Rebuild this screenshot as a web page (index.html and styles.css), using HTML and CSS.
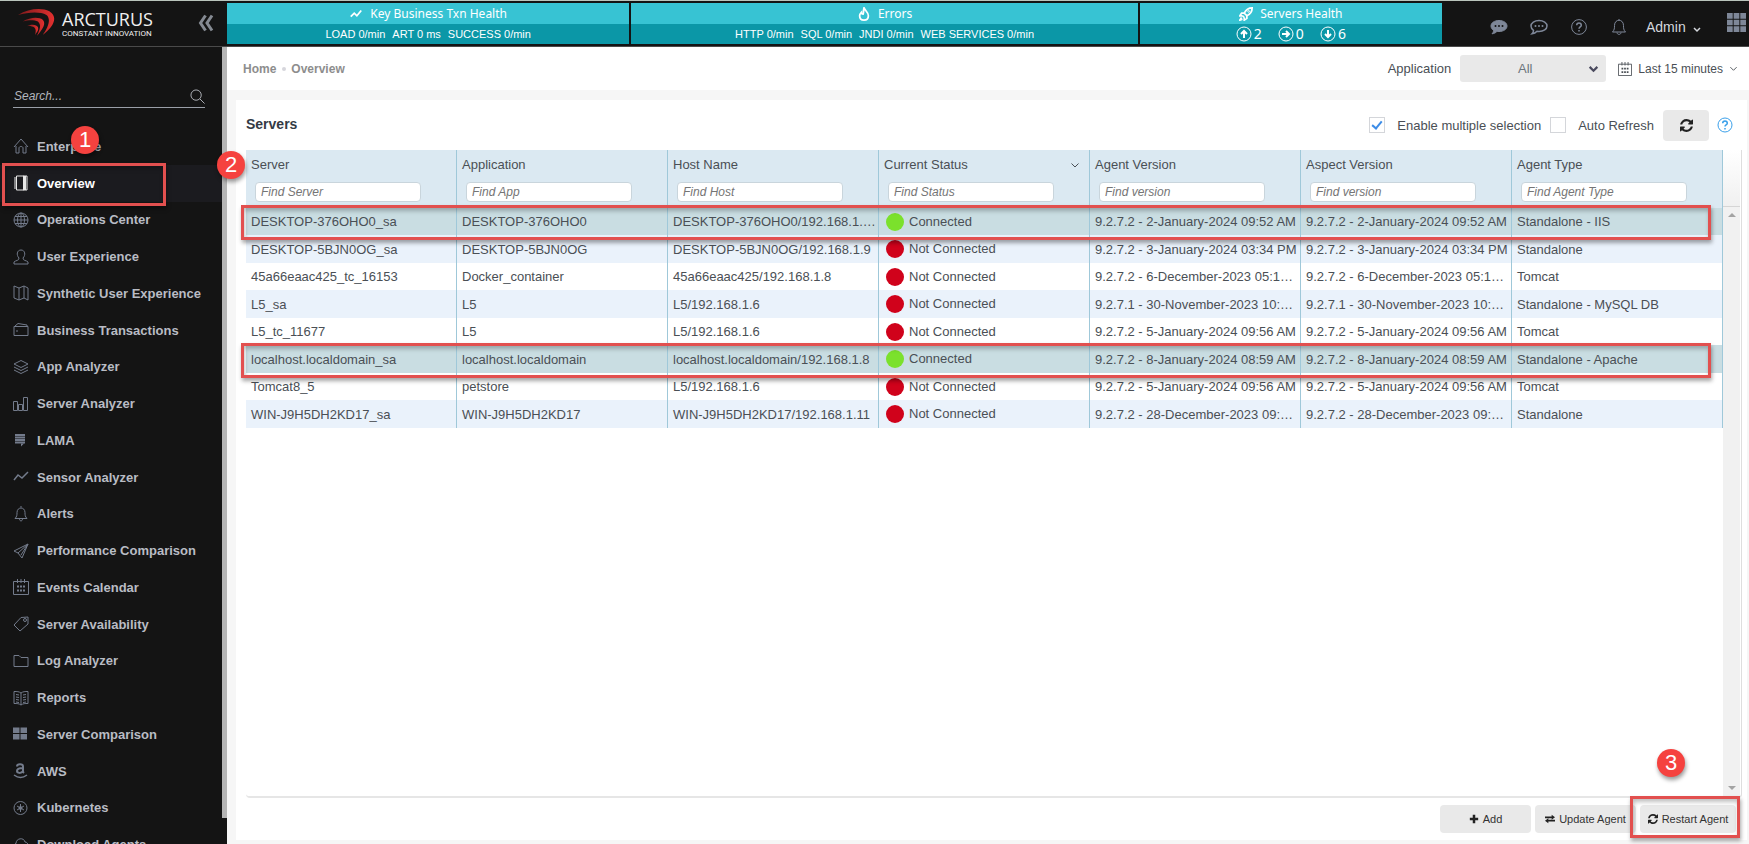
FILE: index.html
```
<!DOCTYPE html>
<html lang="en">
<head>
    <meta charset="UTF-8">
    <meta name="viewport" content="width=device-width, initial-scale=1.0">
    <title>Arcturus - Overview</title>
    <link rel="stylesheet" href="styles.css">
</head>
<body>
    <header class="topbar">
        <div class="brand">
            <svg class="logo" viewBox="0 0 40 32">
                <defs>
                    <linearGradient id="swoosh" x1="0" x2="1">
                        <stop offset="0" stop-color="#7d1a1c"/>
                        <stop offset="1" stop-color="#e2302f"/>
                    </linearGradient>
                </defs>
                <path fill="url(#swoosh)" d="M0 7C11 0 25-1 33 3c10 6 4 17-7 25 6-8 9-17 4-21C23 3 11 4 0 7z"/>
                <path fill="url(#swoosh)" d="M5 14c8-5 17-5 21-2 4 4 0 10-6 17 3-7 5-11 1-15-4-2-10-2-16 0z"/>
                <path fill="url(#swoosh)" d="M9 19c5-3 11-2 12 1 1 3-1 5-3 8 1-4 1-6-1-8-2-1-5-2-8-1z"/>
            </svg>
            <div class="brand-text">
                <span class="brand-name">ARCTURUS</span>
                <span class="brand-tag">CONSTANT INNOVATION</span>
            </div>
            <button class="collapse" aria-label="Collapse menu">
                <svg viewBox="0 0 16 18"><path d="M7.500 1.500 2.500 9l5 7.500M14 1.500 9 9l5 7.500"/></svg>
            </button>
        </div>
        <div class="banner">
            <section class="health">
                <h2><svg class="icon" viewBox="0 0 16 16"><path d="M2 11l4-4 3 3 5-6" stroke-width="2"/></svg>Key Business Txn Health</h2>
                <p><span>LOAD 0/min</span><span>ART 0 ms</span><span>SUCCESS 0/min</span></p>
            </section>
            <section class="health">
                <h2><svg class="icon" viewBox="0 0 16 16"><path d="M8 1c1 3 5 5 5 9 0 3-2 5-5 5s-5-2-5-5c0-2 1-3 2-4 0 1 1 2 2 2 1-2 0-4 1-7z" stroke-width="2"/></svg>Errors</h2>
                <p><span>HTTP 0/min</span><span>SQL 0/min</span><span>JNDI 0/min</span><span>WEB SERVICES 0/min</span></p>
            </section>
            <section class="health">
                <h2><svg class="icon" viewBox="0 0 16 16"><path d="M6 7c2-4 5-6 9-6 0 4-2 7-6 9zM6 7H3L1 10h3M9 10v3l-3 2v-3M4 10l2 2M3 12l-2 3 3-1" stroke-width="2"/><circle cx="11" cy="5" r="1"/></svg>Servers Health</h2>
                <p class="counts">
                    <span><svg class="icon" viewBox="0 0 16 16"><circle cx="8" cy="8" r="7"/><path d="M8 12V5M5 8l3-3 3 3" stroke-width="2"/></svg>2</span>
                    <span><svg class="icon" viewBox="0 0 16 16"><circle cx="8" cy="8" r="7"/><path d="M4 8h7M8 5l3 3-3 3" stroke-width="2"/></svg>0</span>
                    <span><svg class="icon" viewBox="0 0 16 16"><circle cx="8" cy="8" r="7"/><path d="M8 4v7M5 8l3 3 3-3" stroke-width="2"/></svg>6</span>
                </p>
            </section>
        </div>
        <div class="tools">
            <button aria-label="Messages"><svg class="icon" viewBox="0 0 18 16"><path fill="currentColor" d="M9 1.500c4.500 0 8 2.300 8 5.500s-3.500 5.500-8 5.500l-2-.2C5.500 14 4 14.600 2 14.800c1-1 1.500-2 1.500-3.400C2 10.300 1 8.700 1 7c0-3.200 3.500-5.500 8-5.500z"/><path stroke="#141414" stroke-width="2" stroke-linecap="round" d="M5.500 7h0M9 7h0M12.500 7h0"/></svg></button>
            <button aria-label="Feedback"><svg class="icon" viewBox="0 0 18 16"><path stroke-width="1.500" d="M9 1.500c4.500 0 8 2.300 8 5.500s-3.500 5.500-8 5.500l-2-.2C5.500 14 4 14.600 2 14.800c1-1 1.500-2 1.500-3.400C2 10.300 1 8.700 1 7c0-3.200 3.500-5.500 8-5.500z"/><path stroke-width="2" stroke-linecap="round" d="M5.500 7h0M9 7h0M12.500 7h0"/></svg></button>
            <button aria-label="Help"><svg class="icon" viewBox="0 0 16 16"><circle cx="8" cy="8" r="7.400"/><path d="M5.700 6.200c0-3 4.600-3 4.600 0C10.300 8 8 7.900 8 9.800M8 11v1.400" stroke-width="1.500"/></svg></button>
            <button aria-label="Notifications"><svg class="icon" viewBox="0 0 16 16"><path d="M8 0v1M1.500 13c2-2 2-4 2-6.500 0-7 9-7 9 0 0 2.500 0 4.500 2 6.500zM6 13.500c0 2.500 4 2.500 4 0"/></svg></button>
            <button class="admin">Admin <svg class="icon" viewBox="0 0 10 10"><path d="M2 3l3 3 3-3" stroke-width="1.500"/></svg></button>
            <button class="apps" aria-label="Apps"><svg class="icon" viewBox="0 0 20 20"><path fill="currentColor" stroke="none" d="M0 0h6v6H0zM7 0h6v6H7zM14 0h6v6h-6zM0 7h6v6H0zM7 7h6v6H7zM14 7h6v6h-6zM0 14h6v6H0zM7 14h6v6H7zM14 14h6v6h-6z"/></svg></button>
        </div>
    </header>

    <div class="page">
        <aside class="sidebar">
            <div class="sidebar-body">
                <form class="search">
                    <input type="text" placeholder="Search..." aria-label="Search">
                    <button type="button" aria-label="Search"><svg class="icon" viewBox="0 0 16 16"><circle cx="6.500" cy="6.500" r="5.500"/><path d="M10.500 10.500l5 5"/></svg></button>
                </form>
                <nav class="menu">
                    <a href="#"><svg class="icon" viewBox="0 0 16 16"><path d="M1 9l7-8 7 8M3 8v7h3v-5c0-2 4-2 4 0v5h3V8"/></svg>Enterprise</a>
                    <a href="#" class="active"><svg class="icon" viewBox="0 0 16 16"><path d="M3.500 1h7v14h-7zM1 3h3M1 5h3M1 7h3M1 9h3M1 11h3M1 13h3M10 1h4v14h-4"/><path d="M12 1v14" stroke-width="2"/></svg>Overview</a>
                    <a href="#"><svg class="icon" viewBox="0 0 16 16"><circle cx="8" cy="8" r="7"/><path d="M1 8h14M8 1v14M2 4.500h12M2 11.500h12"/><ellipse cx="8" cy="8" rx="3.500" ry="7"/></svg>Operations Center</a>
                    <a href="#"><svg class="icon" viewBox="0 0 16 16"><path d="M1 15v-2c2-2 5-1 5-4C3 6 4 1 8 1s5 5 2 8c0 3 3 2 5 4v2z"/></svg>User Experience</a>
                    <a href="#"><svg class="icon" viewBox="0 0 16 16"><path d="M1 1l5 2 5-2 4 2v12l-4-2-5 2-5-2zM6 3v12M11 1v12"/></svg>Synthetic User Experience</a>
                    <a href="#"><svg class="icon" viewBox="0 0 16 16"><path d="M1 4.500h14v9H1zM2 4l3-2.500L14 3v1.500M3 9h2"/></svg>Business Transactions</a>
                    <a href="#"><svg class="icon" viewBox="0 0 16 16"><path d="M1 5l7-3.500L15 5 8 8.500zM1 8l7 3.500L15 8M1 11l7 3.500 7-3.500"/></svg>App Analyzer</a>
                    <a href="#"><svg class="icon" viewBox="0 0 16 16"><path d="M.5 5.500h4v9h-4zM5.500 8.500h4v6h-4zM10.500 1.500h4v13h-4z"/></svg>Server Analyzer</a>
                    <a href="#"><svg class="icon" viewBox="0 0 16 16"><path d="M2 3h10M2 5.500h10M2 8h10M2 10.500h10" stroke-width="2"/><path d="M8 11.500v3l3-3z" fill="currentColor" stroke="none"/></svg>LAMA</a>
                    <a href="#"><svg class="icon" viewBox="0 0 16 16"><path d="M1 11l4-5 4 3 6-6" stroke-width="1.500"/></svg>Sensor Analyzer</a>
                    <a href="#"><svg class="icon" viewBox="0 0 16 16"><path d="M8 0v1.500M2 12.500c2-2 2-3.500 2-6 0-6 8-6 8 0 0 2.500 0 4 2 6zM6.500 13c0 2.500 3 2.500 3 0"/></svg>Alerts</a>
                    <a href="#"><svg class="icon" viewBox="0 0 16 16"><path d="M15 1L1 8l4 2 4 5zM5 10l10-9-7 11"/></svg>Performance Comparison</a>
                    <a href="#"><svg class="icon" viewBox="0 0 16 16"><path d="M.5 2.500h15v13H.5zM4.500 0v4M8 0v4M11.500 0v4"/><path d="M4 7.500h8M4 11.500h8" stroke-width="2" stroke-dasharray="2 1"/></svg>Events Calendar</a>
                    <a href="#"><svg class="icon" viewBox="0 0 16 16"><path d="M1 9l7-7.500 7-.5v7l-8 7z"/><circle cx="12" cy="4" r="1.500"/></svg>Server Availability</a>
                    <a href="#"><svg class="icon" viewBox="0 0 16 16"><path d="M1 2.500h5l2 2h7v9H1z"/></svg>Log Analyzer</a>
                    <a href="#"><svg class="icon" viewBox="0 0 16 16"><path d="M8 3C6 1.500 4 1.500 1 1.500v12c3 0 5 0 7 1.500 2-1.500 4-1.500 7-1.500v-12c-3 0-5 0-7 1.500zM8 3v12M3 4.500l3 .5M3 7l3 .5M3 9.500l3 .5M3 12l3 .5M13 4.500l-3 .5M13 7l-3 .5M13 9.500l-3 .5M13 12l-3 .5"/></svg>Reports</a>
                    <a href="#"><svg class="icon" viewBox="0 0 16 16"><path fill="currentColor" stroke="none" d="M0 1.500h6.500V7H0zM7.500 1.500H14V7H7.500zM0 8h6.500v5.500H0zM7.500 8H14v5.500H7.500z"/></svg>Server Comparison</a>
                    <a href="#"><svg class="icon" viewBox="0 0 16 16"><path d="M4 3.500c0-3 6-3 6 0V8c0 1.500.5 1.500 1 2M10 5C6 5 4 6 4 8s4 3 6 0" stroke-width="2"/><path d="M1 12c4 3 9 3 13 0" stroke-width="1.500"/></svg>AWS</a>
                    <a href="#"><svg class="icon" viewBox="0 0 16 16"><circle cx="7.500" cy="8" r="6.500"/><path d="M7.500 4v8M4 6l7 4M11 6l-7 4"/><circle cx="7.500" cy="8" r="1.500"/></svg>Kubernetes</a>
                    <a href="#"><svg class="icon" viewBox="0 0 16 16"><path d="M4 12c-4 0-4-5-1-5.500C3 1 11 0 12 5c4 0 4 7 0 7M8 7v8M5 12l3 3 3-3"/></svg>Download Agents</a>
                </nav>
                <div class="mark-box mark-menu"></div>
                <span class="badge badge-1">1</span>
            </div>
            <div class="sidebar-scroll"></div>
        </aside>

        <main class="main">
            <div class="crumbs">
                <a href="#">Home</a><i class="dot"></i><a href="#">Overview</a>
                <div class="filters">
                    <label for="application">Application</label>
                    <div class="select-wrap">
                        <select id="application"><option>All</option></select>
                        <svg class="icon" viewBox="0 0 10 10"><path d="M1.500 3.500L5 7l3.500-3.500" stroke-width="2"/></svg>
                    </div>
                    <button class="range">
                        <svg class="icon" viewBox="0 0 16 16"><path d="M.5 2.500h15v13H.5zM4.500 0v4M8 0v4M11.500 0v4"/><path d="M4 7.500h8M4 11.500h8" stroke-width="2" stroke-dasharray="2 1"/></svg>
                        Last 15 minutes
                        <svg class="icon caret" viewBox="0 0 10 10"><path d="M1.500 3.500L5 7l3.500-3.500"/></svg>
                    </button>
                </div>
            </div>

            <div class="content">
                <div class="card">
                    <div class="card-head">
                        <h1>Servers</h1>
                        <label><input type="checkbox" checked>Enable multiple selection</label>
                        <label><input type="checkbox">Auto Refresh</label>
                        <button class="refresh" aria-label="Refresh"><svg viewBox="0 0 1536 1536"><path d="M1511 928q0 5-1 7-64 268-268 434.500t-478 166.500q-146 0-282.500-55t-243.500-157l-129 129q-19 19-45 19t-45-19-19-45v-448q0-26 19-45t45-19h448q26 0 45 19t19 45-19 45l-137 137q71 66 161 102t187 36q134 0 250-65t186-179q11-17 53-117 8-23 30-23h192q13 0 22.500 9.500t9.500 22.500zm25-800v448q0 26-19 45t-45 19h-448q-26 0-45-19t-19-45 19-45l138-138q-148-137-349-137-134 0-250 65t-186 179q-11 17-53 117-8 23-30 23h-199q-13 0-22.500-9.500t-9.500-22.500v-7q65-268 270-434.500t480-166.500q146 0 284 55.500t245 156.500l130-129q19-19 45-19t45 19 19 45z"/></svg></button>
                        <a href="#" class="help" aria-label="Help"><svg class="icon" viewBox="0 0 16 16"><circle cx="8" cy="8" r="7"/><path d="M5.700 6.200c0-3 4.600-3 4.600 0C10.300 8 8 7.900 8 9.500M8 11v1.400" stroke-width="1.500"/></svg></a>
                    </div>

                    <div class="grid">
                        <div class="grid-body">
                            <table>
                                <thead>
                                    <tr>
                                        <th>Server<input type="text" placeholder="Find Server" aria-label="Find Server"></th>
                                        <th>Application<input type="text" placeholder="Find App" aria-label="Find App"></th>
                                        <th>Host Name<input type="text" placeholder="Find Host" aria-label="Find Host"></th>
                                        <th><div class="sorted">Current Status<svg class="icon" viewBox="0 0 10 10"><path d="M1.500 3.500L5 7l3.500-3.500"/></svg></div><input type="text" placeholder="Find Status" aria-label="Find Status"></th>
                                        <th>Agent Version<input type="text" placeholder="Find version" aria-label="Find agent version"></th>
                                        <th>Aspect Version<input type="text" placeholder="Find version" aria-label="Find aspect version"></th>
                                        <th>Agent Type<input type="text" placeholder="Find Agent Type" aria-label="Find Agent Type"></th>
                                    </tr>
                                </thead>
                                <tbody>
                                    <tr class="selected">
                                        <td>DESKTOP-376OHO0_sa</td><td>DESKTOP-376OHO0</td><td>DESKTOP-376OHO0/192.168.1.10</td>
                                        <td><i class="status up"></i>Connected</td>
                                        <td>9.2.7.2 - 2-January-2024 09:52 AM</td><td>9.2.7.2 - 2-January-2024 09:52 AM</td><td>Standalone - IIS</td>
                                    </tr>
                                    <tr>
                                        <td>DESKTOP-5BJN0OG_sa</td><td>DESKTOP-5BJN0OG</td><td>DESKTOP-5BJN0OG/192.168.1.9</td>
                                        <td><i class="status down"></i>Not Connected</td>
                                        <td>9.2.7.2 - 3-January-2024 03:34 PM</td><td>9.2.7.2 - 3-January-2024 03:34 PM</td><td>Standalone</td>
                                    </tr>
                                    <tr>
                                        <td>45a66eaac425_tc_16153</td><td>Docker_container</td><td>45a66eaac425/192.168.1.8</td>
                                        <td><i class="status down"></i>Not Connected</td>
                                        <td>9.2.7.2 - 6-December-2023 05:12 PM</td><td>9.2.7.2 - 6-December-2023 05:12 PM</td><td>Tomcat</td>
                                    </tr>
                                    <tr>
                                        <td>L5_sa</td><td>L5</td><td>L5/192.168.1.6</td>
                                        <td><i class="status down"></i>Not Connected</td>
                                        <td>9.2.7.1 - 30-November-2023 10:10 AM</td><td>9.2.7.1 - 30-November-2023 10:10 AM</td><td>Standalone - MySQL DB</td>
                                    </tr>
                                    <tr>
                                        <td>L5_tc_11677</td><td>L5</td><td>L5/192.168.1.6</td>
                                        <td><i class="status down"></i>Not Connected</td>
                                        <td>9.2.7.2 - 5-January-2024 09:56 AM</td><td>9.2.7.2 - 5-January-2024 09:56 AM</td><td>Tomcat</td>
                                    </tr>
                                    <tr class="selected">
                                        <td>localhost.localdomain_sa</td><td>localhost.localdomain</td><td>localhost.localdomain/192.168.1.8</td>
                                        <td><i class="status up"></i>Connected</td>
                                        <td>9.2.7.2 - 8-January-2024 08:59 AM</td><td>9.2.7.2 - 8-January-2024 08:59 AM</td><td>Standalone - Apache</td>
                                    </tr>
                                    <tr>
                                        <td>Tomcat8_5</td><td>petstore</td><td>L5/192.168.1.6</td>
                                        <td><i class="status down"></i>Not Connected</td>
                                        <td>9.2.7.2 - 5-January-2024 09:56 AM</td><td>9.2.7.2 - 5-January-2024 09:56 AM</td><td>Tomcat</td>
                                    </tr>
                                    <tr>
                                        <td>WIN-J9H5DH2KD17_sa</td><td>WIN-J9H5DH2KD17</td><td>WIN-J9H5DH2KD17/192.168.1.11</td>
                                        <td><i class="status down"></i>Not Connected</td>
                                        <td>9.2.7.2 - 28-December-2023 09:30 AM</td><td>9.2.7.2 - 28-December-2023 09:30 AM</td><td>Standalone</td>
                                    </tr>
                                </tbody>
                            </table>
                        </div>
                        <div class="grid-scroll">
                            <div class="grid-corner"></div>
                            <div class="track"><i class="arrow-up"></i><i class="arrow-down"></i></div>
                        </div>
                        <div class="mark-box mark-row-1"></div>
                        <div class="mark-box mark-row-2"></div>
                        <span class="badge badge-2">2</span>
                    </div>

                    <div class="actions">
                        <button><svg viewBox="0 0 12 12"><path d="M4.500 1h3v3.500H11v3H7.500V11h-3V7.500H1v-3h3.500z"/></svg>Add</button>
                        <button class="wide"><svg viewBox="0 0 12 12"><path d="M0 3h8V1l4 3-4 3V5H0zM12 7H4V5L0 8l4 3V9h8z"/></svg>Update Agent</button>
                        <button class="last"><svg viewBox="0 0 1536 1536"><path d="M1511 928q0 5-1 7-64 268-268 434.500t-478 166.500q-146 0-282.500-55t-243.500-157l-129 129q-19 19-45 19t-45-19-19-45v-448q0-26 19-45t45-19h448q26 0 45 19t19 45-19 45l-137 137q71 66 161 102t187 36q134 0 250-65t186-179q11-17 53-117 8-23 30-23h192q13 0 22.500 9.500t9.500 22.500zm25-800v448q0 26-19 45t-45 19h-448q-26 0-45-19t-19-45 19-45l138-138q-148-137-349-137-134 0-250 65t-186 179q-11 17-53 117-8 23-30 23h-199q-13 0-22.500-9.500t-9.500-22.500v-7q65-268 270-434.500t480-166.500q146 0 284 55.500t245 156.500l130-129q19-19 45-19t45 19 19 45z"/></svg>Restart Agent</button>
                        <div class="mark-box mark-restart"></div>
                        <span class="badge badge-3">3</span>
                    </div>
                </div>
            </div>
        </main>
    </div>
</body>
</html>
```
FILE: styles.css
```
* {
    box-sizing: border-box;
}
body {
    margin: 0;
    height: 100vh;
    display: flex;
    flex-direction: column;
    overflow: hidden;
    font-family: "Liberation Sans", Arial, sans-serif;
    font-size: 13px;
    color: #4a4f55;
    background: #f6f6f6;
}
button {
    border: none;
    background: none;
    padding: 0;
    font-family: inherit;
    color: inherit;
    cursor: pointer;
}
a {
    color: inherit;
    text-decoration: none;
}
.icon {
    width: 16px;
    height: 16px;
    flex: none;
    display: block;
    fill: none;
    stroke: currentColor;
}

/* top bar */
.topbar {
    height: 47px;
    flex: none;
    display: flex;
    background: #141414;
    border-top: 1px solid #b9c4bc;
    border-bottom: 1px solid #4a4a4a;
}
.brand {
    width: 227px;
    display: flex;
    padding: 7px 13px 0 18px;
}
.logo {
    width: 38px;
    height: 31px;
}
.brand-text {
    flex: 1;
    padding: 1px 0 0 6px;
    color: #f0f0f0;
}
.brand-name {
    display: block;
    font: 18px/20px "Open Sans", sans-serif;
}
.brand-tag {
    display: block;
    font: 8px/10px Roboto, sans-serif;
    white-space: nowrap;
}
.collapse {
    width: 16px;
    height: 18px;
    margin-top: 6px;
}
.collapse svg {
    width: 16px;
    height: 18px;
    fill: none;
    stroke: #858a92;
    stroke-width: 3;
}
.banner {
    flex: 1;
    display: grid;
    grid-template-columns: 402fr 506fr 302fr;
    gap: 2px;
    padding: 2px 0;
    color: #fff;
}
.health {
    background: #0b97a7;
}
.health h2 {
    margin: 0;
    height: 21px;
    display: flex;
    justify-content: center;
    align-items: center;
    gap: 7px;
    background: #37c3d3;
    font: 12px/21px "Noto Sans", sans-serif;
}
.health h2 .icon {
    width: 14px;
    height: 14px;
}
.health p {
    margin: 0;
    height: 20px;
    display: flex;
    justify-content: center;
    align-items: center;
    gap: 7px;
    font-size: 11px;
}
.health .counts {
    gap: 16px;
    font: 14px/20px "Noto Sans", sans-serif;
}
.counts span {
    display: flex;
    align-items: center;
    gap: 2px;
}
.tools {
    width: 307px;
    display: flex;
    align-items: center;
    gap: 22px;
    padding: 6px 3px 0 48px;
    color: #7e8798;
}
.tools .icon {
    width: 18px;
    height: 16px;
}
.tools .admin {
    display: flex;
    align-items: center;
    gap: 6px;
    margin-left: -4px;
    font-size: 14px;
    color: #d5d8de;
}
.tools .admin .icon {
    width: 10px;
    height: 10px;
    margin-top: 6px;
}
.tools .apps {
    margin: -8px 0 0 auto;
}
.tools .apps .icon {
    width: 19px;
    height: 19px;
}

/* sidebar */
.page {
    flex: 1;
    min-height: 0;
    display: flex;
}
.sidebar {
    width: 227px;
    flex: none;
    display: flex;
    background: #141414;
}
.sidebar-body {
    flex: 1;
    position: relative;
    overflow: hidden;
}
.sidebar-scroll {
    width: 5px;
    margin-bottom: 26px;
    background: #b5b5b5;
}
.search {
    display: flex;
    align-items: center;
    height: 27px;
    margin: 34px 17px 20px 13px;
    padding-top: 3px;
    border-bottom: 1px solid #9a9fa8;
}
.search input {
    flex: 1;
    min-width: 0;
    border: none;
    outline: none;
    padding: 0 1px;
    background: none;
    color: #c8cbd2;
    font: italic 12px "Liberation Sans", Arial, sans-serif;
}
.search input::placeholder {
    color: #b3b6bd;
}
.search button {
    margin-top: 2px;
    color: #b3b6bd;
}
.search .icon {
    width: 15px;
    height: 15px;
}
.menu {
    height: 735px;
    display: flex;
    flex-direction: column;
}
.menu a {
    flex: 1;
    display: flex;
    align-items: center;
    gap: 8px;
    padding-left: 13px;
    font-weight: bold;
    color: #b9bcc4;
}
.menu .icon {
    color: #737b8b;
}
.menu .active {
    background: #1b1b1f;
    color: #fff;
}
.menu .active .icon {
    color: #e8e8e8;
}

/* main area */
.main {
    flex: 1;
    min-width: 0;
    display: flex;
    flex-direction: column;
}
.crumbs {
    height: 43px;
    flex: none;
    display: flex;
    align-items: center;
    padding: 0 11px 0 16px;
    background: #fff;
    font-size: 12px;
    font-weight: bold;
    color: #8d8d8d;
}
.dot {
    width: 4px;
    height: 4px;
    margin: 0 5px 0 6px;
    border-radius: 50%;
    background: #d6d6dc;
}
.filters {
    margin-left: auto;
    display: flex;
    align-items: center;
    font-size: 13px;
    font-weight: normal;
    color: #4a4f55;
}
.select-wrap {
    position: relative;
    margin: 0 12px 0 9px;
}
.select-wrap select {
    appearance: none;
    width: 146px;
    height: 27px;
    padding-right: 16px;
    border: none;
    border-radius: 3px;
    background: #e9e9e9;
    text-align: center;
    text-align-last: center;
    font-family: inherit;
    font-size: 13px;
    color: #6c757d;
}
.select-wrap .icon {
    position: absolute;
    top: 8px;
    right: 7px;
    width: 11px;
    height: 11px;
    color: #4a4a5e;
    pointer-events: none;
}
.range {
    display: flex;
    align-items: center;
    gap: 6px;
    font-size: 12px;
}
.range .icon {
    width: 14px;
    height: 14px;
}
.range .caret {
    width: 9px;
    height: 9px;
}
.content {
    flex: 1;
    min-height: 0;
    padding: 10px 2px 4px 9px;
}
.card {
    height: 100%;
    display: flex;
    flex-direction: column;
    padding: 0 5px 0 10px;
    background: #fff;
}
.card-head {
    height: 50px;
    flex: none;
    display: flex;
    align-items: center;
    padding-right: 9px;
}
.card-head h1 {
    margin: 0 auto 0 0;
    padding-bottom: 3px;
    font-size: 14px;
    color: #333a45;
}
.card-head label {
    display: flex;
    align-items: center;
    gap: 12px;
    margin-right: 9px;
}
.card-head input {
    appearance: none;
    width: 16px;
    height: 16px;
    margin: 0;
    display: grid;
    place-items: center;
    border: 1px solid #d4d6da;
    background: #fff;
}
.card-head input:checked::after {
    content: "";
    width: 4px;
    height: 8px;
    margin-top: -2px;
    border: solid #3c8ce7;
    border-width: 0 2px 2px 0;
    transform: rotate(40deg);
}
.refresh {
    width: 46px;
    height: 31px;
    border-radius: 4px;
    background: #e9e9e9;
}
.refresh svg {
    width: 13px;
    height: 13px;
    display: block;
    margin: auto;
    fill: #222;
}
.help {
    margin-left: 8px;
    color: #3aa0ea;
}

/* servers table */
.grid {
    flex: 1;
    min-height: 0;
    position: relative;
    display: flex;
    padding-right: 1px;
    border-right: 1px solid #dedede;
    border-bottom: 2px solid #e6e6e6;
    border-radius: 0 0 4px 4px;
}
.grid-body {
    flex: 1;
    min-width: 0;
}
table {
    width: 100%;
    table-layout: fixed;
    border-collapse: separate;
    border-spacing: 0;
}
th {
    height: 58px;
    padding: 7px 5px 0;
    border-right: 1px solid #9fc8d9;
    background: #dbe9f2;
    vertical-align: top;
    text-align: left;
    font-weight: normal;
    line-height: 16px;
}
th input {
    display: block;
    width: 83%;
    height: 20px;
    margin: 9px 0 0 4px;
    padding: 0 5px;
    border: 1px solid #c9d5dc;
    border-radius: 4px;
    background: #fff;
    font: italic 12px "Liberation Sans", Arial, sans-serif;
}
th input::placeholder {
    color: #757575;
}
.sorted {
    display: flex;
    justify-content: space-between;
    align-items: center;
    padding-right: 4px;
}
.sorted .icon {
    width: 10px;
    height: 10px;
}
td {
    height: 27px;
    padding: 0 1px 0 5px;
    border-right: 1px solid #9fc8d9;
    overflow: hidden;
    text-overflow: ellipsis;
    white-space: nowrap;
}
tbody tr:nth-child(even) td {
    height: 28px;
    background: #eaf2fb;
}
tbody .selected td,
tbody .selected:nth-child(even) td {
    background: #c9dde2;
}
.status {
    display: inline-block;
    width: 18px;
    height: 18px;
    margin: 0 5px 0 2px;
    border-radius: 50%;
    vertical-align: -5px;
}
.up {
    background: #7be12c;
}
.down {
    background: #d0021b;
}
.grid-scroll {
    width: 17px;
    display: flex;
    flex-direction: column;
}
.grid-corner {
    height: 57px;
    background: linear-gradient(#fff, #f0f0f0);
    border-bottom: 1px solid #d5d5d5;
}
.track {
    flex: 1;
    display: flex;
    flex-direction: column;
    justify-content: space-between;
    align-items: center;
    padding: 6px 0;
    background: #f1f1f1;
}
.arrow-up,
.arrow-down {
    border: 4px solid transparent;
}
.arrow-up {
    border-top: none;
    border-bottom-color: #a3a3a3;
}
.arrow-down {
    border-bottom: none;
    border-top-color: #a3a3a3;
}
.actions {
    height: 42px;
    flex: none;
    position: relative;
    display: flex;
    justify-content: flex-end;
    align-items: center;
    gap: 4px;
    padding-right: 6px;
}
.actions button {
    width: 91px;
    height: 28px;
    display: flex;
    justify-content: center;
    align-items: center;
    gap: 4px;
    border-radius: 4px;
    background: #e9e9e9;
    font-size: 11px;
    color: #333;
}
.actions .wide {
    width: 101px;
}
.actions .last {
    width: 96px;
}
.actions svg {
    width: 10px;
    height: 10px;
    fill: #222;
}

/* step markers over the page */
.mark-box {
    position: absolute;
    border: 3px solid #e2504f;
    box-shadow: 1px 3px 4px rgba(0, 0, 0, 0.35), inset 1px 3px 4px rgba(0, 0, 0, 0.25);
    pointer-events: none;
}
.badge {
    position: absolute;
    width: 28px;
    height: 28px;
    border-radius: 50%;
    background: #f5423f;
    box-shadow: 1px 3px 4px rgba(0, 0, 0, 0.4);
    color: #fff;
    font-size: 22px;
    line-height: 28px;
    text-align: center;
}
.mark-menu {
    top: 116px;
    left: 2px;
    width: 164px;
    height: 43px;
}
.mark-row-1,
.mark-row-2 {
    left: -5px;
    right: 30px;
    height: 35px;
}
.mark-row-1 {
    top: 55px;
}
.mark-row-2 {
    top: 193px;
}
.mark-restart {
    right: 2px;
    bottom: 2px;
    width: 110px;
    height: 42px;
}
.badge-1 {
    top: 79px;
    left: 71px;
}
.badge-2 {
    top: 1px;
    left: -29px;
}
.badge-3 {
    right: 57px;
    bottom: 63px;
}
```
